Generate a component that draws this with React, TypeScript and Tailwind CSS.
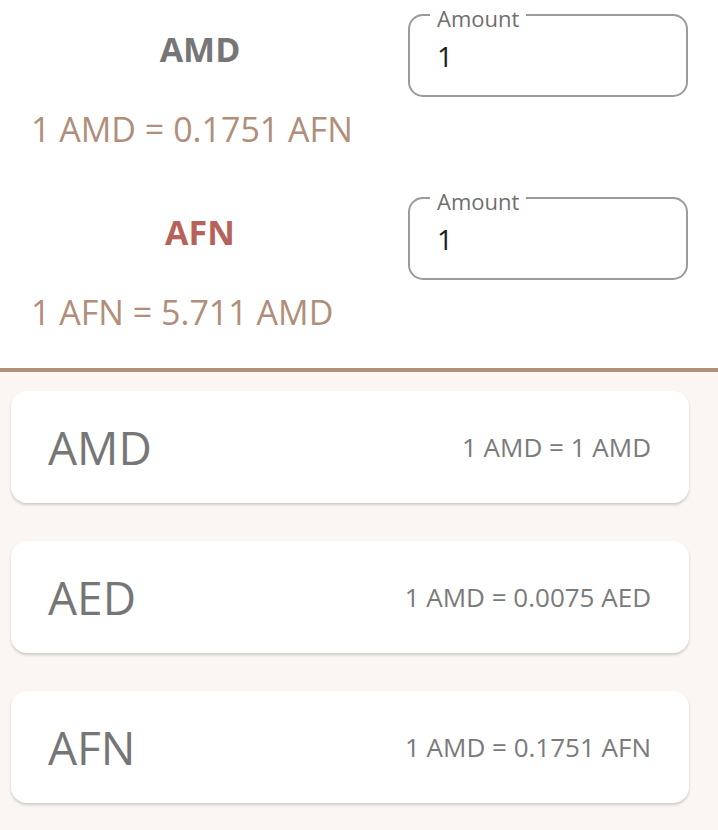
import React from "react";

// ── data ─────────────────────────────────────────────────────────────────────

const converters = [
  { code: "AMD", rate: "1 AMD = 0.1751 AFN", color: "text-[#767676]" },
  { code: "AFN", rate: "1 AFN = 5.711 AMD", color: "text-[#b5625a]" },
];

const rates = [
  { code: "AMD", rate: "1 AMD = 1 AMD" },
  { code: "AED", rate: "1 AMD = 0.0075 AED" },
  { code: "AFN", rate: "1 AMD = 0.1751 AFN" },
];

// ── AmountField ──────────────────────────────────────────────────────────────

const AmountField = ({ value }: { value: string }) => (
  <div className="relative h-[83px] w-[280px] rounded-[15px] border-2 border-[#9b9b9b] bg-white">
    <span className="absolute left-[20px] top-[-12px] bg-white px-[7px] text-[22px] leading-[28px] text-[#6f6f6f]">
      Amount
    </span>
    <div className="pl-[27px] pt-[21px] text-[28px] leading-[38px] text-[#1d1d1d]">
      {value}
    </div>
  </div>
);

// ── App ──────────────────────────────────────────────────────────────────────

export default function App() {
  return (
    <div className="min-h-screen w-[718px] bg-[#fbf6f1] font-['Open_Sans',sans-serif]">
      {/* ── Converter ── */}
      <section className="bg-white pt-[14px] pb-[33px]">
        {converters.map((c, i) => (
          <div key={c.code} className={i > 0 ? "mt-[45px]" : ""}>
            <div className="flex h-[83px] gap-[8px]">
              <div className="flex w-[400px] justify-center pt-[12px]">
                <span className={`text-[34px] font-bold leading-[46px] ${c.color}`}>
                  {c.code}
                </span>
              </div>
              <AmountField value="1" />
            </div>
            <p className="mt-[9px] pl-[31px] text-[34px] leading-[46px] text-[#b08e7a]">
              {c.rate}
            </p>
          </div>
        ))}
      </section>

      <div className="h-[4px] bg-[#b28f7b]" />

      {/* ── Rate list ── */}
      <section className="flex flex-col gap-[38px] pl-[11px] pr-[29px] pt-[19px] pb-[27px]">
        {rates.map((r) => (
          <div
            key={r.code}
            className="flex h-[112px] items-center justify-between rounded-[16px] bg-white pl-[37px] pr-[38px] shadow-[0_2px_3px_rgba(0,0,0,0.18)]"
          >
            <span className="text-[46px] leading-[62px] text-[#767676]">{r.code}</span>
            <span className="text-[26px] leading-[36px] text-[#7a7a7a]">{r.rate}</span>
          </div>
        ))}
      </section>
    </div>
  );
}
